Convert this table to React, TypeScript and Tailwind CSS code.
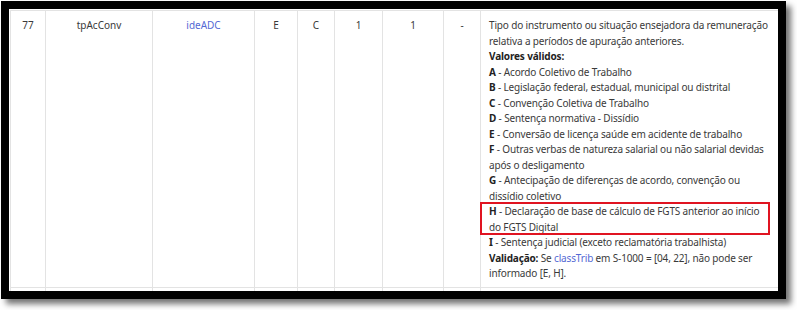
import React from "react";

const cellBase = "border-r border-[#e3e3e3] pt-[7px] pb-[5px] text-center";
const B = ({ children }: { children: React.ReactNode }) => (
  <span className="font-bold text-[#222]">{children}</span>
);

export default function App() {
  const widthCls = ["w-[36px]", "w-[107px]", "w-[102px]", "w-[43px]", "w-[37px]", "w-[48px]", "w-[61px]", "w-[37px]"];
  return (
    <div className="w-[797px] h-[310px] bg-white pt-[1px] pl-[1px]">
      <div
        className="w-[785px] h-[298px] border-8 border-black bg-white overflow-hidden shadow-[5px_5px_6px_rgba(0,0,0,0.55)]"
        style={{ fontFamily: '"Noto Sans", "Open Sans", sans-serif' }}
      >
        <div className="pl-[1px] pt-[1px] text-[10px] leading-[15.5px] text-[#3a3a3a]">
          <div className="flex border-t border-b border-[#e3e3e3]">
            <div className={`${cellBase} border-l w-[36px] shrink-0`}>77</div>
            <div className={`${cellBase} w-[107px] shrink-0`}>tpAcConv</div>
            <div className={`${cellBase} w-[102px] shrink-0 text-[#5469d4]`}>ideADC</div>
            <div className={`${cellBase} w-[43px] shrink-0`}>E</div>
            <div className={`${cellBase} w-[37px] shrink-0`}>C</div>
            <div className={`${cellBase} w-[48px] shrink-0`}>1</div>
            <div className={`${cellBase} w-[61px] shrink-0`}>1</div>
            <div className={`${cellBase} w-[37px] shrink-0`}>-</div>
            <div className="pt-[7px] pb-[5px] pl-[8px] w-[292px] shrink-0 text-left whitespace-nowrap tracking-[-0.15px]">
              <div>
                Tipo do instrumento ou situação ensejadora da remuneração
                <br />
                relativa a períodos de apuração anteriores.
              </div>
              <div><B>Valores válidos:</B></div>
              <div><B>A</B> - Acordo Coletivo de Trabalho</div>
              <div><B>B</B> - Legislação federal, estadual, municipal ou distrital</div>
              <div><B>C</B> - Convenção Coletiva de Trabalho</div>
              <div><B>D</B> - Sentença normativa - Dissídio</div>
              <div><B>E</B> - Conversão de licença saúde em acidente de trabalho</div>
              <div>
                <B>F</B> - Outras verbas de natureza salarial ou não salarial devidas
                <br />
                após o desligamento
              </div>
              <div>
                <B>G</B> - Antecipação de diferenças de acordo, convenção ou
                <br />
                dissídio coletivo
              </div>
              <div className="relative">
                <B>H</B> - Declaração de base de cálculo de FGTS anterior ao início
                <br />
                do FGTS Digital
                <div className="absolute -left-[9px] -top-[2px] w-[290px] h-[33px] border-2 border-[#e01421]" />
              </div>
              <div><B>I</B> - Sentença judicial (exceto reclamatória trabalhista)</div>
              <div>
                <B>Validação:</B> Se <span className="text-[#5469d4]">classTrib</span> em S-1000 = [04, 22], não pode ser
                <br />
                informado [E, H].
              </div>
            </div>
          </div>
          <div className="flex h-[20px]">
            {widthCls.map((w, i) => (
              <div
                key={i}
                className={`border-r border-[#e3e3e3] shrink-0 ${w} ${i === 0 ? "border-l" : ""}`}
              />
            ))}
          </div>
        </div>
      </div>
    </div>
  );
}
